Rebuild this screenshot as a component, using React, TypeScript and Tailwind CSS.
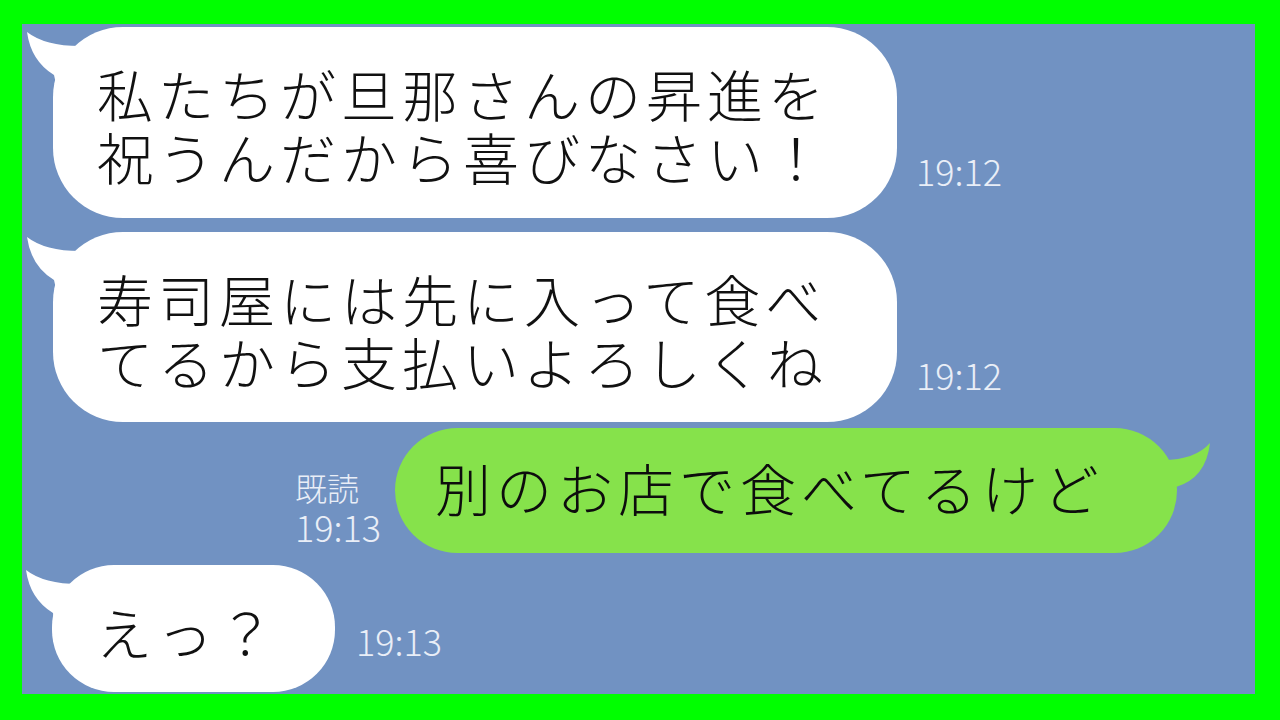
const jp = "font-['Noto_Sans_CJK_JP','Noto_Sans',sans-serif]"

function TailLeft() {
  return (
    <svg
      className="absolute left-[-30px] top-0 w-[90px] h-[80px]"
      viewBox="0 0 90 80"
    >
      <path
        d="M4 5 Q22 19 57 19 L90 19 L90 70 L36 70 L31 48 Q8 34 4 5 Z"
        fill="#ffffff"
      />
    </svg>
  )
}

function TailRight() {
  return (
    <svg
      className="absolute right-[-40px] top-0 w-[80px] h-[80px]"
      viewBox="0 0 80 80"
    >
      <path
        d="M73 15 Q58 32 26 32 L0 32 L0 75 L30 75 L39 59 Q69 50 73 15 Z"
        fill="#86e24b"
      />
    </svg>
  )
}

function Time({ children }: { children: React.ReactNode }) {
  return (
    <span
      className={`${jp} text-[36px] leading-none font-light text-[#e9eef7]`}
    >
      {children}
    </span>
  )
}

interface BubbleProps {
  lines: string[]
  className: string
}

function WhiteBubble({ lines, className }: BubbleProps) {
  return (
    <div className={`relative bg-white ${className}`}>
      <TailLeft />
      <div
        className={`relative ${jp} text-[56px] leading-[63px] tracking-[5px] font-light text-[#111111] whitespace-nowrap`}
      >
        {lines.map(line => (
          <div key={line}>{line}</div>
        ))}
      </div>
    </div>
  )
}

export default function App() {
  return (
    <div className="w-[1280px] h-[720px] bg-[#00ff00] pt-[24px] pl-[22px] pr-[25px] pb-[26px]">
      <div className="h-full bg-[#7192c2] flex flex-col pl-[31px] pt-[3px] overflow-hidden">
        <div className="flex items-end gap-[19px]">
          <WhiteBubble
            lines={['私たちが旦那さんの昇進を', '祝うんだから喜びなさい！']}
            className="w-[844px] h-[191px] rounded-[70px] pl-[44px] pt-[34px]"
          />
          <div className="mb-[26px]">
            <Time>19:12</Time>
          </div>
        </div>

        <div className="flex items-end gap-[19px] mt-[14px]">
          <WhiteBubble
            lines={['寿司屋には先に入って食べ', 'てるから支払いよろしくね']}
            className="w-[844px] h-[190px] rounded-[70px] pl-[44px] pt-[34px]"
          />
          <div className="mb-[26px]">
            <Time>19:12</Time>
          </div>
        </div>

        <div className="flex items-end justify-end gap-[14px] pr-[78px] mt-[6px]">
          <div
            className={`${jp} flex flex-col mb-[8px] text-[#e9eef7] font-light`}
          >
            <span className="text-[32px] leading-[40px]">既読</span>
            <span className="text-[36px] leading-[38px]">19:13</span>
          </div>
          <div className="relative w-[782px] h-[125px] rounded-full bg-[#86e24b] pl-[40px] pt-[27px]">
            <TailRight />
            <div
              className={`relative ${jp} text-[56px] leading-[63px] tracking-[5px] font-light text-[#0d0d0d] whitespace-nowrap`}
            >
              別のお店で食べてるけど
            </div>
          </div>
        </div>

        <div className="flex items-end gap-[21px] mt-[12px]">
          <WhiteBubble
            lines={['えっ？']}
            className="w-[283px] h-[127px] rounded-[62px] pl-[44px] pt-[34px] -ml-[1px]"
          />
          <div className="mb-[30px]">
            <Time>19:13</Time>
          </div>
        </div>
      </div>
    </div>
  )
}
